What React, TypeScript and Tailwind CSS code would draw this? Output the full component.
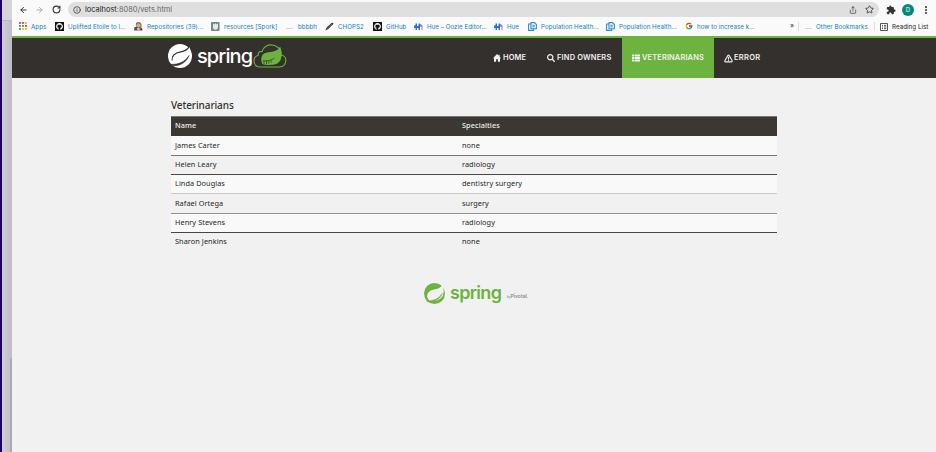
import React from "react";
import { FaSearch, FaThList, FaGithub } from "react-icons/fa";
import { FcGoogle } from "react-icons/fc";
import { MdExtension } from "react-icons/md";
import { ArrowLeft, ArrowRight, RotateCw, Info, Share, Star, MoreVertical, TriangleAlert } from "lucide-react";

const AppsIcon = () => (
  <svg viewBox="0 0 8 8" className="h-2 w-2">
    {["#ea4335", "#ea4335", "#fbbc04", "#34a853", "#4285f4", "#ea4335", "#34a853", "#fbbc04", "#fbbc04"].map((c, i) => (
      <rect key={i} x={(i % 3) * 3} y={Math.floor(i / 3) * 3} width="1.9" height="1.9" fill={c} />
    ))}
  </svg>
);
const GitIcon = () => (
  <span className="flex h-[9px] w-[9px] items-center justify-center bg-[#111]">
    <FaGithub className="h-[7px] w-[7px] text-white" />
  </span>
);
const PersonIcon = () => (
  <svg viewBox="0 0 9 9" className="h-[9px] w-[9px]">
    <path d="M2 4 Q1 0 4.5 0 Q8 0 7.5 5 L6 7 L3 6Z" fill="#8d6a4c" />
    <circle cx="4.5" cy="3.2" r="2" fill="#d9ab86" />
    <path d="M0 8.5 L0.5 5 L3 5 L5 7 L8 5.5 L8.5 8.5Z" fill="#574d48" />
    <path d="M3 6 L5 5.5 L6 8.5 L3.5 8.5Z" fill="#d8c9bd" />
  </svg>
);
const SporkIcon = () => (
  <svg viewBox="0 0 9 9" className="h-[9px] w-[9px]">
    <rect width="8.6" height="9" rx="1" fill="#6f8b90" />
    <path d="M2 1.5 L3.3 2.5 L4.5 1.3 L5.6 2.5 L7 1.6 V5.5 Q6.5 7.7 4.5 7.7 Q2.2 7.7 2 5.5Z" fill="#efeadb" />
  </svg>
);
const FolderIcon = () => <span className="mt-1 block h-px w-[7px] bg-[#d5d5d5]" />;
const PenIcon = () => (
  <svg viewBox="0 0 9 9" className="h-[9px] w-[9px]">
    <path d="M0.3 8.5 L2 5 L7 0.7 L8.5 1 L8 2.3 L3.3 7Z" fill="#333" />
    <path d="M2.4 6.2 L7 2" stroke="#999" strokeWidth=".5" />
  </svg>
);
const HueIcon = () => (
  <svg viewBox="0 0 9 9" className="h-[9px] w-[9px]">
    <path d="M0 3.5 H1.5 V1.5 H3 V4 H4.5 V1.5 H6 V8 H4.5 V6 H3 V8 H1.5 V6 H0Z" fill="#2677bd" />
    <path d="M6 2 Q8.7 2 8.6 4.5 V8 H7.5 V5 H6Z" fill="#a78ab9" />
  </svg>
);
const PopIcon = () => (
  <svg viewBox="0 0 9 9" className="h-[9px] w-[9px]" fill="none" stroke="#2a8fd0" strokeWidth="1.1">
    <path d="M3 0.6 H6.4 L8.4 2.5 V6.8 H3Z" />
    <path d="M3 2 H0.6 V8.4 H5.6 V7 M4.4 3.2 H6.8 M4.4 4.8 H6.8" />
  </svg>
);
const GoogleIcon = () => <FcGoogle className="h-[8px] w-[8px]" />;

const bookmarks = [
  { icon: AppsIcon, label: "Apps", box: "w-[36px]", gap: "gap-[4px]" },
  { icon: GitIcon, label: "Uplifted Etoile to l...", box: "w-[79px]", gap: "gap-[4px]" },
  { icon: PersonIcon, label: "Repositories (39)...", box: "w-[77px]", gap: "gap-[4px]" },
  { icon: SporkIcon, label: "resources [Spork]", box: "w-[75px]", gap: "gap-[4px]" },
  { icon: FolderIcon, label: "bbbbh", box: "w-[39px]", gap: "gap-[5px]" },
  { icon: PenIcon, label: "CHOPS2", box: "w-[48px]", gap: "gap-[4px]" },
  { icon: GitIcon, label: "GitHub", box: "w-[41px]", gap: "gap-[4px]" },
  { icon: HueIcon, label: "Hue – Oozie Editor...", box: "w-[80px]", gap: "gap-[4px]" },
  { icon: HueIcon, label: "Hue", box: "w-[34px]", gap: "gap-[4px]" },
  { icon: PopIcon, label: "Population Health...", box: "w-[78px]", gap: "gap-[4px]" },
  { icon: PopIcon, label: "Population Health...", box: "w-[79px]", gap: "gap-[4px]" },
  { icon: GoogleIcon, label: "how to increase k...", box: "w-[105px]", gap: "gap-[4px]" },
];

const vets = [
  ["James Carter", "none"],
  ["Helen Leary", "radiology"],
  ["Linda Douglas", "dentistry surgery"],
  ["Rafael Ortega", "surgery"],
  ["Henry Stevens", "radiology"],
  ["Sharon Jenkins", "none"],
];
const rowStyles = [
  "h-[20px] pb-px bg-[#f9f9f9] border-b border-[#777674]",
  "h-[19px] pb-px border-b border-[#4d4643]",
  "h-[19px] pb-px bg-[#f9f9f9] border-b border-[#c9c9c8]",
  "h-[20px] pb-px border-b border-[#93918f]",
  "h-[19px] pb-px bg-[#f9f9f9] border-b border-[#484542]",
  "h-[19px] pb-[2px]",
];

// Round emblem with a leaf cut into it; the leaf interior takes its own colour.
function SpringMark({ size, leaf, edge, vein }: { size: string; leaf: string; edge: string; vein: string }) {
  return (
    <svg viewBox="0 0 24 24" className={size}>
      <circle cx="12" cy="12" r="12" fill="currentColor" />
      <path
        d="M21.3 2.2 C19.6 5.8 16.8 7.2 12.8 7.8 C6.5 8.8 3.4 12 4.2 16.4 C4.5 18.2 5 19.3 6 20.2 C10.5 21.4 17 20.3 20.3 16.2 C23.3 12.4 22.8 6.5 21.3 2.2Z"
        fill={leaf}
      />
      <path
        d="M22 1.6 C19.6 5.8 16.8 7.2 12.8 7.8 C6.5 8.8 3.4 12 4.2 16.4"
        fill="none"
        stroke={edge}
        strokeWidth="1.2"
      />
      <path d="M2.8 20.4 C11 20.4 16.5 18.4 21 11.6 C18 18.8 12 22 5.2 21.6Z" fill={vein} stroke={vein} strokeWidth=".6" />
    </svg>
  );
}

function CloudLeaf() {
  return (
    <svg viewBox="0 0 34 24" className="h-6 w-[34px]">
      <path
        d="M7.5 23 H26.5 C34.5 22.2 34.8 11.7 28 11 C28 -1 11.5 -2.5 9 7.6 C5.6 6.8 4.9 9.5 5.3 11.2 C-1.2 13 -.2 23 7.5 23Z"
        fill="none"
        stroke="#6db33f"
        strokeWidth="1.1"
      />
      <path d="M27 2.5 C30 9 29.8 20.2 19.8 20.8 C15.5 21.2 12 20.8 9.3 20 C7 13.5 8.7 9 15.3 8.2 C21 7.8 25 6.8 27 2.5Z" fill="#6db33f" />
      <path d="M11 17 V20 M13.5 17 V20 M15.8 17 V19.6 M18.2 16.5 V18.6 M10 16.8 H14 C17 16.6 19.5 15.6 21.5 14" stroke="#34302d" strokeWidth=".7" fill="none" />
    </svg>
  );
}

export default function App() {
  return (
    <div className="flex h-[452px] w-[936px] overflow-hidden bg-[#f1f1f1] font-['Inter',sans-serif]">
      <aside className="flex w-[12px] shrink-0">
        <div className="w-[2px] bg-[#200060]" />
        <div className="flex w-[10px] flex-col bg-linear-to-r from-[#d0ced5] to-[#bfbdc3]">
          <div className="h-[21px] border-b border-[#bbb9be] bg-[#d5d3d7]" />
          <div className="h-[337px]" />
          <div className="ml-[8px] flex-1 rounded-tl-sm bg-[#aaa9ac]" />
        </div>
      </aside>
      <div className="flex min-w-0 flex-1 flex-col">
        <div className="flex h-[19px] shrink-0 items-center bg-[#fafafa] pl-[7px] text-[#333]">
          <ArrowLeft className="h-[10px] w-[9px]" strokeWidth={2.6} />
          <ArrowRight className="ml-[7px] h-[10px] w-[9px] text-[#aaa]" strokeWidth={2.6} />
          <RotateCw className="ml-[8px] h-[9px] w-[9px]" strokeWidth={3} />
          <div className="ml-[7px] flex h-[15px] w-[811px] items-center rounded-full bg-[#dfdfdf] pl-[5px]">
            <Info className="h-2 w-2" strokeWidth={2.2} />
            <span className="ml-[4px] text-[7.45px] whitespace-nowrap text-[#666]">
              <span className="text-[#222]">localhost</span>:8080/vets.html
            </span>
            <Share className="ml-auto h-[8px] w-[8px]" strokeWidth={2} />
            <Star className="mr-[5px] ml-[8px] h-[9px] w-[9px]" strokeWidth={2.2} />
          </div>
          <MdExtension className="ml-[7px] h-[10px] w-[10px] text-[#333]" />
          <span className="ml-[6px] flex h-[12px] w-[12px] items-center justify-center rounded-full bg-[#00897b] text-[6px] text-white">D</span>
          <MoreVertical className="ml-[7px] h-[10px] w-[10px]" strokeWidth={3} />
        </div>
        <div className="flex h-[17px] shrink-0 items-center bg-[#fafafa] pb-[2px] pl-[7px] text-[6.2px] whitespace-nowrap text-[#1580c4]">
          {bookmarks.map((b, i) => {
            const Icon = b.icon;
            return (
              <div key={i} className={`flex shrink-0 items-center ${b.box} ${b.gap}`}>
                <span className="shrink-0">
                  <Icon />
                </span>
                <span className="tracking-[0.04px]">{b.label}</span>
              </div>
            );
          })}
          <span className="w-[8px] text-[7px] text-[#333]">»</span>
          <span className="mr-[6px] h-[9px] w-px bg-[#ddd]" />
          <FolderIcon />
          <span className="ml-[4px] w-[58px] tracking-[0.06px]">Other Bookmarks</span>
          <span className="mr-[5px] h-[9px] w-px bg-[#ddd]" />
          <svg viewBox="0 0 8 8" className="h-2 w-2" fill="none" stroke="#444" strokeWidth=".9">
            <path d="M.5 .5H7.5V7.5H.5Z M2 2.4H3 M4 2.4H6.2 M2 4H3 M4 4H6.2 M2 5.6H3 M4 5.6H6.2" />
          </svg>
          <span className="ml-[4px] tracking-[0.05px] text-[#222]">Reading List</span>
        </div>
        <header className="flex h-[42px] shrink-0 border-t-2 border-[#6db33f] bg-[#34302d]">
          <div className="flex w-[472px] shrink-0 items-start pt-[6px] pl-[156px] text-white">
            <SpringMark size="h-6 w-6" leaf="#ffffff" edge="#34302d" vein="#34302d" />
            <span className="ml-[5px] w-[56px] text-[20px] leading-[24px] font-medium tracking-[-0.9px]">spring</span>
            <CloudLeaf />
          </div>
          <nav className="flex items-stretch text-[7.5px] font-semibold tracking-[0.1px] whitespace-nowrap text-[#f1f1f1]">
            <a className="flex w-[54px] items-center gap-[2px] pl-[9px]">
              <svg viewBox="0 0 8 8" className="h-2 w-2 shrink-0" fill="currentColor">
                <path d="M4 0 L5.6 1.6 V.7 H6.6 V2.6 L8 4.2 H7 V7.8 H4.9 V5.2 H3.1 V7.8 H1 V4.2 H0Z" />
              </svg>
              HOME
            </a>
            <a className="flex w-[84px] items-center gap-[2px] pl-[9px] tracking-[0.15px]">
              <FaSearch className="h-2 w-2 shrink-0" />
              FIND OWNERS
            </a>
            <a className="flex w-[92px] items-center gap-[2px] bg-[#6db33f] pl-[10px]">
              <FaThList className="h-2 w-2 shrink-0" />
              VETERINARIANS
            </a>
            <a className="flex items-center gap-[1px] pl-[10px] tracking-[0.3px]">
              <TriangleAlert className="h-[9px] w-[9px] shrink-0" strokeWidth={3} />
              ERROR
            </a>
          </nav>
        </header>
        <main className="flex flex-col pl-[159px] font-['Noto_Sans',sans-serif] text-[#34302d]">
          <h2 className="mt-[20px] h-[18px] text-[10px] leading-[14px] font-medium tracking-[-0.1px]">Veterinarians</h2>
          <div className="flex w-[606px] flex-col text-[7.3px] tracking-[0.08px]">
            <div className="flex h-[20px] items-center border-t border-[#777] bg-[#3b3733] pb-[2px] pl-[4px] font-medium text-[#f1f1f1]">
              <span className="w-[287px]">Name</span>
              <span>Specialties</span>
            </div>
            {vets.map(([name, specialty], i) => (
              <div key={name} className={`flex items-center pl-[4px] text-[#221f1d] ${rowStyles[i]}`}>
                <span className="w-[287px]">{name}</span>
                <span>{specialty}</span>
              </div>
            ))}
          </div>
          <footer className="mt-[29px] flex h-[24px] items-center pl-[253px] font-['Inter',sans-serif] text-[#6db33f]">
            <SpringMark size="h-[21px] w-[21px]" leaf="#f1f1f1" edge="#f1f1f1" vein="#6db33f" />
            <span className="ml-[5px] w-[57px] text-[18px] leading-[22px] font-semibold tracking-[-0.7px]">spring</span>
            <span className="mt-[8px] text-[3px] text-[#777]">by</span>
            <span className="mt-[7px] text-[5px] font-semibold text-[#888]">Pivotal.</span>
          </footer>
        </main>
      </div>
    </div>
  );
}
